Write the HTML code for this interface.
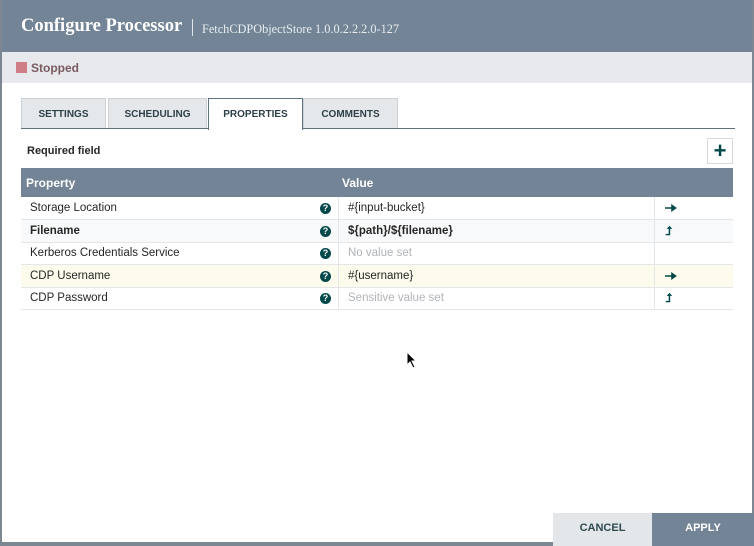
<!DOCTYPE html>
<html><head><style>
*{box-sizing:border-box;margin:0;padding:0}
body{width:754px;height:546px;background:#7d8791;font-family:"Liberation Sans",sans-serif;position:relative;overflow:hidden}
.dlg{position:absolute;left:2px;top:0;width:750px;height:542px;background:#fff}
.hdr{position:absolute;left:0;top:0;width:750px;height:52px;background:#728495}
.hdr .t{position:absolute;left:19px;top:16px;font-family:"Liberation Serif",serif;font-weight:bold;font-size:18.5px;color:#fff}
.hdr .s{position:absolute;left:200px;top:22px;font-family:"Liberation Serif",serif;font-size:12.3px;color:#e8edf1}
.hdr .bar{position:absolute;left:190px;top:19px;width:1px;height:17px;background:#dfe5ea}
.st{position:absolute;left:0;top:52px;width:750px;height:31px;background:#e8e9ec}
.st .sq{position:absolute;left:14px;top:10px;width:11px;height:11px;background:#cf7d86}
.st span{position:absolute;left:29px;top:9px;font-size:12px;font-weight:bold;color:#7a5a5f}
.tab{position:absolute;top:98px;height:31px;background:#e4e8eb;border:1px solid #ccd2d6;font-size:10px;font-weight:bold;color:#2d3f47;text-align:center;line-height:31px}
.tab.a{background:#fff;border-color:#5f7480;border-bottom:none;height:32px}
.tl{position:absolute;left:19px;top:128px;width:714px;height:1px;background:#5f7480}
.req{position:absolute;left:25px;top:145px;font-size:11px;font-weight:bold;color:#262626}
.plus{position:absolute;left:705px;top:138px;width:26px;height:26px;border:1px solid #d5dade;background:#fff;color:#004849;font-size:22px;font-weight:bold;text-align:center;line-height:24px}
.th{position:absolute;left:19px;top:168px;width:712px;height:29px;background:#728495;color:#fff;font-size:12px;font-weight:bold}
.th span{position:absolute;top:8px}
.row{position:absolute;left:19px;width:712px;height:23px;border-bottom:1px solid #e3e7ea;font-size:11.5px;color:#262626}
.row .n{position:absolute;left:9px;top:5px}
.row .q{position:absolute;left:299px;top:6px;width:11px;height:11px;border-radius:50%;background:#004849;color:#fff;font-size:9px;font-weight:bold;text-align:center;line-height:11px}
.row .v{position:absolute;left:317px;top:0;width:1px;height:23px;background:#e3e7ea}
.row .vt{position:absolute;left:327px;top:5px}
.row .a{position:absolute;left:633px;top:0;width:1px;height:23px;background:#e3e7ea}
.row .ic{position:absolute;left:644px;top:4px;font-size:12px;color:#004849;font-weight:bold}
.g{color:#b0b4b8}
.btn{position:absolute;top:513px;height:33px;font-size:11px;font-weight:bold;text-align:center;line-height:30px}
</style></head><body>
<div class="dlg">
<div class="hdr"><div class="t">Configure Processor</div><div class="bar"></div><div class="s">FetchCDPObjectStore 1.0.0.2.2.2.0-127</div></div>
<div class="st"><div class="sq"></div><span>Stopped</span></div>
<div class="tab" style="left:19px;width:85px">SETTINGS</div>
<div class="tab" style="left:106px;width:99px">SCHEDULING</div>
<div class="tab" style="left:301px;width:95px">COMMENTS</div>
<div class="tl"></div>
<div class="tab a" style="left:206px;width:95px">PROPERTIES</div>
<div class="req">Required field</div>
<div class="plus">+</div>
<div class="th"><span style="left:5px">Property</span><span style="left:321px">Value</span></div>
<div class="row" style="top:197px"><span class="n">Storage Location</span><span class="q">?</span><span class="v"></span><span class="vt">#{input-bucket}</span><span class="a"></span><svg class="ic" width="12" height="14" viewBox="0 0 12 14"><path d="M0 7H9M7 4.5L10.5 7L7 9.5Z" stroke="#004849" stroke-width="1.6" fill="#004849"/></svg></div>
<div class="row" style="top:220px;background:#f8f9fa"><span class="n" style="font-weight:bold">Filename</span><span class="q">?</span><span class="v"></span><span class="vt" style="font-weight:bold">${path}/${filename}</span><span class="a"></span><span class="ic">⮥</span></div>
<div class="row" style="top:242px"><span class="n">Kerberos Credentials Service</span><span class="q">?</span><span class="v"></span><span class="vt g">No value set</span><span class="a"></span></div>
<div class="row" style="top:265px;background:#fdfbeb"><span class="n">CDP Username</span><span class="q">?</span><span class="v"></span><span class="vt">#{username}</span><span class="a"></span><svg class="ic" width="12" height="14" viewBox="0 0 12 14"><path d="M0 7H9M7 4.5L10.5 7L7 9.5Z" stroke="#004849" stroke-width="1.6" fill="#004849"/></svg></div>
<div class="row" style="top:287px"><span class="n">CDP Password</span><span class="q">?</span><span class="v"></span><span class="vt g">Sensitive value set</span><span class="a"></span><span class="ic">⮥</span></div>
<svg style="position:absolute;left:404px;top:351px" width="12" height="18" viewBox="0 0 12 18"><path d="M1 1 L1 14 L4 11 L7 17 L9 16 L6 10 L10 10 Z" fill="#000" stroke="#fff" stroke-width="1"/></svg>
</div>
<div class="btn" style="left:553px;width:99px;background:#e3e7ea;color:#2d4a50">CANCEL</div>
<div class="btn" style="left:652px;width:102px;background:#728495;color:#fff">APPLY</div>
</body></html>
